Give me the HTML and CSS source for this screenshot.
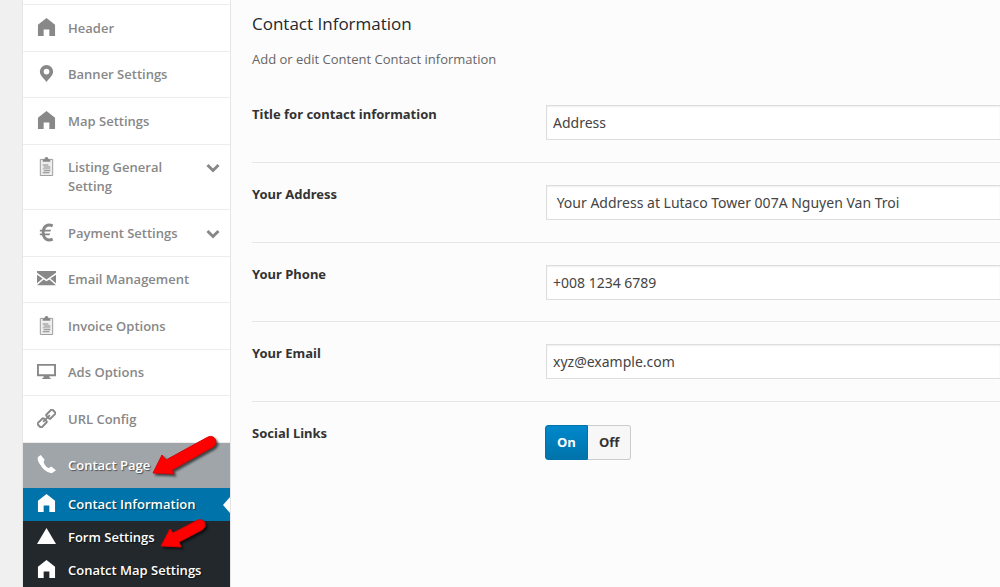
FILE: index.html
```
<!DOCTYPE html>
<html lang="en">
<head>
  <meta charset="UTF-8">
  <title>Contact Information</title>
  <meta name="viewport" content="width=device-width, initial-scale=1.0">
  <link rel="stylesheet" href="styles.css">
</head>
<body>
  <svg class="sprite" aria-hidden="true">
    <symbol id="home" viewBox="0 0 20 20">
      <path d="M10 0L1 7v12h6v-7h6v7h6V7z"/>
    </symbol>
    <symbol id="pin" viewBox="0 0 20 20">
      <path fill-rule="evenodd" d="M10 1a7 7 0 0 0-7 7c0 4 4 7 7 11 3-4 7-7 7-11a7 7 0 0 0-7-7zm0 4a3 3 0 1 1 0 6 3 3 0 0 1 0-6z"/>
    </symbol>
    <symbol id="clipboard" viewBox="0 0 20 20">
      <path fill="#eee" stroke="#999" d="M3.500 2.500h13v17h-13z"/>
      <path d="M8 2a2 2 0 0 1 4 0l2 1v2H6V3zM6 8h6v1H6zM7 10h7v1H7zM6 12h8v1H6zM7 14h7v1H7zM6 16h7v1H6z"/>
    </symbol>
    <symbol id="euro" viewBox="0 0 20 20">
      <path fill="none" stroke="currentColor" stroke-width="3" d="M16.500 3C11 .6 6.500 3.500 6.500 10S11 19.400 16.500 17"/>
      <path d="M3 7h12l-1 2H3zM3 11h11l-1 2H3z"/>
    </symbol>
    <symbol id="mail" viewBox="0 0 20 20">
      <path d="M0 2h20v2l-10 7L0 4zM0 6l6 4-6 5zM20 6l-6 4 6 5zM7 11l3 2 3-2 7 6H0z"/>
    </symbol>
    <symbol id="monitor" viewBox="0 0 20 20">
      <path fill-rule="evenodd" d="M0 2h20v13h-7v1l2 2H5l2-2v-1H0zm2 2v9h16V4z"/>
    </symbol>
    <symbol id="link" viewBox="0 0 20 20">
      <g fill="none" stroke="currentColor" stroke-width="2" transform="rotate(-45 10 10)">
        <rect x="-1" y="7" width="9" height="6" rx="1"/>
        <rect x="12" y="7" width="9" height="6" rx="1"/>
        <path d="M5 10h10"/>
      </g>
    </symbol>
    <symbol id="phone" viewBox="0 0 20 20">
      <path d="M4 0L1 2c-1 2 0 5 3 9 3 5 8 8 12 8l4-3-5-4-3 2C9 12 7 9 7 7l1-2z"/>
    </symbol>
    <symbol id="triangle" viewBox="0 0 20 20">
      <path d="M10 1l10 17H0z"/>
    </symbol>
    <symbol id="chevron" viewBox="0 0 14 10">
      <path fill="none" stroke="currentColor" stroke-width="3" d="M1.500 2L7 7.500 12.500 2"/>
    </symbol>
    <symbol id="arrow" viewBox="0 0 65 41">
      <path fill="#f00" stroke="#d00" d="M1 38L10 20l4 5L56 2c7-3 11 6 5 10L20 35l2 4z"/>
    </symbol>
    <symbol id="arrowSmall" viewBox="0 0 47 30">
      <path fill="#f00" stroke="#d00" d="M1 28L10 11l3 4L38 2c7-2 10 6 4 10L19 24l2 5z"/>
    </symbol>
  </svg>

  <div class="panel">
    <nav class="sidebar">
      <ul class="menu">
        <li><a href="#"><svg class="icon"><use href="#home"/></svg><span>Header</span></a></li>
        <li><a href="#"><svg class="icon"><use href="#pin"/></svg><span>Banner Settings</span></a></li>
        <li><a href="#"><svg class="icon"><use href="#home"/></svg><span>Map Settings</span></a></li>
        <li><a href="#"><svg class="icon"><use href="#clipboard"/></svg><span>Listing General Setting</span><svg class="chevron"><use href="#chevron"/></svg></a></li>
        <li><a href="#"><svg class="icon"><use href="#euro"/></svg><span>Payment Settings</span><svg class="chevron"><use href="#chevron"/></svg></a></li>
        <li><a href="#"><svg class="icon"><use href="#mail"/></svg><span>Email Management</span></a></li>
        <li><a href="#"><svg class="icon"><use href="#clipboard"/></svg><span>Invoice Options</span></a></li>
        <li><a href="#"><svg class="icon"><use href="#monitor"/></svg><span>Ads Options</span></a></li>
        <li><a href="#"><svg class="icon"><use href="#link"/></svg><span>URL Config</span></a></li>
        <li class="open"><a href="#"><svg class="icon"><use href="#phone"/></svg><span>Contact Page</span></a><svg class="arrow"><use href="#arrow"/></svg></li>
      </ul>
      <ul class="submenu">
        <li class="active"><a href="#"><svg class="icon"><use href="#home"/></svg><span>Contact Information</span></a></li>
        <li><a href="#"><svg class="icon"><use href="#triangle"/></svg><span>Form Settings</span></a><svg class="arrow small"><use href="#arrowSmall"/></svg></li>
        <li><a href="#"><svg class="icon"><use href="#home"/></svg><span>Conatct Map Settings</span></a></li>
      </ul>
    </nav>

    <main>
      <h1>Contact Information</h1>
      <p class="desc">Add or edit Content Contact information</p>
      <form>
        <div class="field">
          <label for="title">Title for contact information</label>
          <input type="text" id="title" value="Address">
        </div>
        <div class="field">
          <label for="address">Your Address</label>
          <input type="text" id="address" value=" Your Address at Lutaco Tower 007A Nguyen Van Troi">
        </div>
        <div class="field">
          <label for="phoneNumber">Your Phone</label>
          <input type="text" id="phoneNumber" value="+008 1234 6789">
        </div>
        <div class="field">
          <label for="email">Your Email</label>
          <input type="text" id="email" value="xyz@example.com">
        </div>
        <div class="field" role="radiogroup" aria-labelledby="socialLabel">
          <span class="label" id="socialLabel">Social Links</span>
          <div class="switch">
            <input type="radio" name="social" id="socialOn" checked>
            <label for="socialOn">On</label>
            <input type="radio" name="social" id="socialOff">
            <label for="socialOff">Off</label>
          </div>
        </div>
      </form>
    </main>
  </div>
</body>
</html>
```
FILE: styles.css
```
* { box-sizing: border-box; }
body {
  font-family: "Segoe UI", "Open Sans", "Noto Sans", sans-serif;
  font-size: 13px;
  line-height: 19px;
  background: #f0f0f0;
  color: #333;
  margin: 0;
}
.sprite {
  position: absolute;
  width: 0;
  height: 0;
}
.panel {
  display: flex;
  min-height: 100vh;
  margin-left: 22px;
  overflow: hidden;
}
.sidebar {
  flex: none;
  width: 209px;
  padding-top: 4px;
  background: #fff;
  border: solid #e5e5e5;
  border-width: 0 1px;
}
ul {
  list-style: none;
  margin: 0;
  padding: 0;
}
.menu {
  border-top: 1px solid #ececec;
}
.menu a, .submenu a {
  display: flex;
  align-items: flex-start;
  color: #888;
  font-weight: 600;
  text-decoration: none;
}
.menu a {
  padding: 14px 10px 13px 14px;
}
.menu li {
  position: relative;
  border-bottom: 1px solid #ececec;
}
.menu li:nth-child(even) a {
  padding-top: 13px;
}
.menu span {
  flex: 1;
  padding-right: 20px;
}
.icon {
  flex: none;
  width: 19px;
  height: 19px;
  margin-top: -1px;
  margin-right: 12px;
  fill: currentColor;
}
.chevron {
  flex: none;
  width: 14px;
  height: 10px;
  margin-top: 5px;
}
.menu .open {
  background: #a0a5aa;
  border-bottom: none;
}
.open a, .submenu a {
  color: #fff;
  text-shadow: 1px 1px 1px rgba(0,0,0,0.5);
}
.submenu {
  background: #23282d;
  border-bottom: 1px solid #ececec;
}
.submenu li {
  position: relative;
}
.submenu a {
  padding: 7px 0 7px 14px;
}
.submenu .active {
  background: #0073aa;
}
.active::after {
  content: "";
  position: absolute;
  top: 9px;
  right: 0;
  border: solid transparent;
  border-width: 8px 7px 8px 0;
  border-right-color: #fcfcfc;
}
.arrow {
  position: absolute;
  top: -8px;
  right: 13px;
  width: 65px;
  height: 41px;
  filter: drop-shadow(2px 2px 1px rgba(0,0,0,0.6));
}
.arrow.small {
  top: -3px;
  right: 23px;
  width: 47px;
  height: 30px;
}
main {
  flex: 1;
  min-width: 0;
  padding: 14px 0 20px 21px;
  background: #fcfcfc;
}
h1 {
  margin: 0;
  font-size: 17px;
  font-weight: 500;
  line-height: 20px;
  color: #23282d;
}
.desc {
  margin: 16px 0 14px;
  color: #666;
}
.field {
  display: grid;
  grid-template-columns: 294px 1fr;
  align-items: start;
  padding: 22px 0;
  border-bottom: 1px solid #e7e7e7;
}
.field:nth-child(3) {
  padding-bottom: 21px;
}
.field:last-child {
  border-bottom: none;
}
.field > label, .label {
  font-family: "Segoe UI", "Noto Sans", sans-serif;
  font-weight: 700;
  line-height: 18px;
}
input[type="text"] {
  width: 100%;
  height: 35px;
  margin: 0;
  padding: 0 6px;
  border: 1px solid #ddd;
  border-right: none;
  background: #fff;
  color: #444;
  font-family: "Segoe UI", "Noto Sans", sans-serif;
  font-size: 14px;
  box-shadow: inset 0 1px 2px rgba(0,0,0,0.07);
}
.switch {
  display: flex;
  margin: 1px 0 0 -1px;
}
.switch input {
  position: absolute;
  opacity: 0;
}
.switch label {
  padding: 7px 11px;
  border: 1px solid #ccc;
  border-left: none;
  border-radius: 0 3px 3px 0;
  background: #f7f7f7;
  font-weight: 700;
}
.switch label:first-of-type {
  border: 1px solid #0073aa;
  border-radius: 3px 0 0 3px;
}
.switch input:checked + label {
  background: linear-gradient(#0088cc, #0073aa);
  color: #fff;
}
```
